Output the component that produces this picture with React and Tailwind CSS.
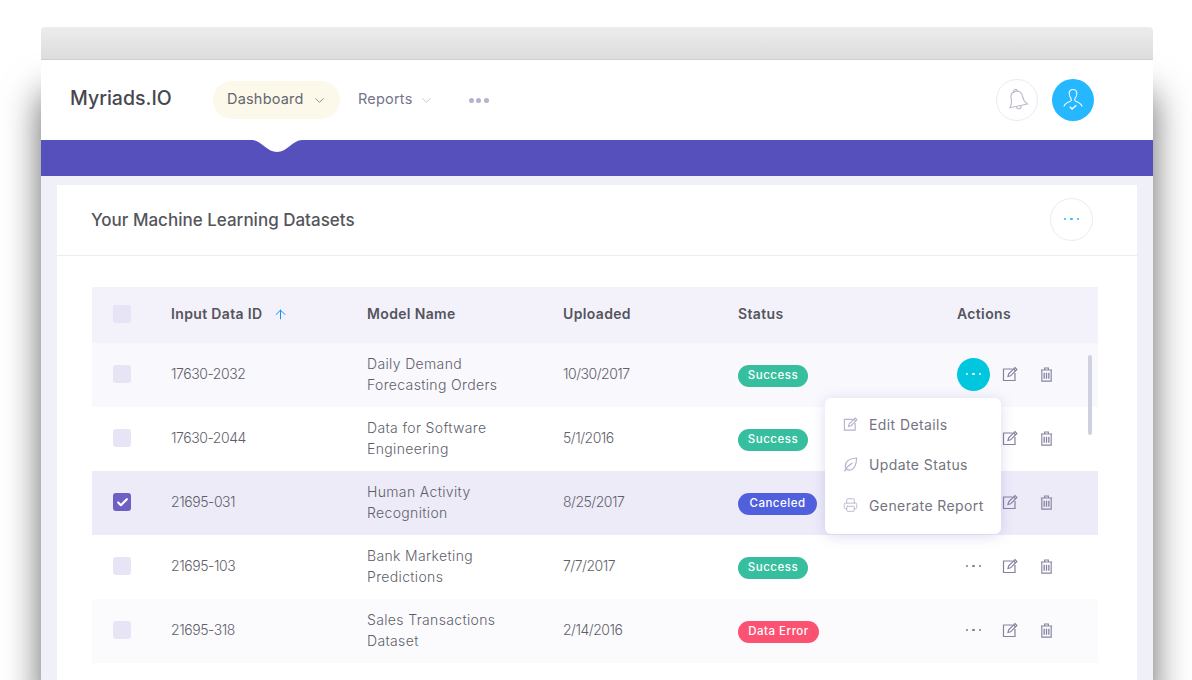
import { ChevronDown, ArrowUp, Printer, Check } from 'lucide-react'

const rows = [
  { id: '17630-2032', name: ['Daily Demand', 'Forecasting Orders'], date: '10/30/2017', status: 'Success', bg: 'bg-[#f8f8fd]', open: true },
  { id: '17630-2044', name: ['Data for Software', 'Engineering'], date: '5/1/2016', status: 'Success', bg: 'bg-white' },
  { id: '21695-031', name: ['Human Activity', 'Recognition'], date: '8/25/2017', status: 'Canceled', bg: 'bg-[#edebf8]', checked: true },
  { id: '21695-103', name: ['Bank Marketing', 'Predictions'], date: '7/7/2017', status: 'Success', bg: 'bg-white' },
  { id: '21695-318', name: ['Sales Transactions', 'Dataset'], date: '2/14/2016', status: 'Data Error', bg: 'bg-[#fbfbfd]' },
]

const statusColors = {
  Success: 'bg-[#35bf9e] w-[70px]',
  Canceled: 'bg-[#5060dc] w-[79px]',
  'Data Error': 'bg-[#fb5272] w-[81px]',
}

const gridCols = 'grid grid-cols-[79px_196px_196px_175px_219px_1fr] items-center'

function EditIcon({ className }) {
  return (
    <svg viewBox="0 0 16 16" fill="none" stroke="currentColor" strokeWidth="1.2" className={className}>
      <path d="M10.5 3H1.500v11.500H13V7" />
      <path d="M6 10.500l.7-2.600L13 1.600l1.900 1.900-6.300 6.300z" />
      <path d="M11.600 3l1.900 1.900" />
    </svg>
  )
}

function TrashIcon({ className }) {
  return (
    <svg viewBox="0 0 16 16" fill="none" stroke="currentColor" strokeWidth="1.200" className={className}>
      <path d="M2 3.200h12M3 3.200V15h10V3.200M6 3V1h4v2" />
      <path d="M5.500 6v6.500M8 6v6.500M10.500 6v6.500" strokeWidth="1.400" />
    </svg>
  )
}

function LeafIcon({ className }) {
  return (
    <svg viewBox="0 0 16 16" fill="none" stroke="currentColor" strokeWidth="1.200" className={className}>
      <path d="M14.500 1C8.500 1.500 2.500 3.500 2.500 9.300c0 2.800 1.700 4.700 4.300 4.700 5.400 0 7.700-6.500 7.700-13z" />
      <path d="M1.500 15.500C3.500 11.500 6.500 8.500 10 6.500" />
    </svg>
  )
}

function BellIcon({ className }) {
  return (
    <svg viewBox="0 0 24 24" fill="none" stroke="currentColor" strokeWidth="1.100" className={className}>
      <g transform="rotate(-12 12 12)">
        <path d="M12 3c-3.800 0-5.600 2.800-5.600 6.300 0 3.600-1.200 6-3 8h17.200c-1.800-2-3-4.400-3-8C17.600 5.800 15.800 3 12 3z" />
        <path d="M10.200 3.300C10.200 2 11 1.200 12 1.200s1.800.8 1.800 2.100M9.500 17.300c.3 1.800 1.300 2.800 2.500 2.800s2.200-1 2.500-2.800" />
      </g>
    </svg>
  )
}

function UserCheckIcon({ className }) {
  return (
    <svg viewBox="0 0 24 24" fill="none" stroke="currentColor" strokeWidth="1.100" className={className}>
      <path d="M12 1.500c-2.400 0-3.800 1.700-3.800 4 0 2.300.9 3.900 1.800 5 .5.700.4 2-.5 2.600-1.700 1-6 2-6.500 5.400" />
      <path d="M12 1.500c2.400 0 3.800 1.700 3.800 4 0 2.300-.9 3.900-1.800 5-.5.700-.4 2 .5 2.600 1.700 1 6 2 6.500 5.400" />
      <path d="M8.800 18.800l2.300 2.200 4.200-3.800" strokeWidth="1.300" />
    </svg>
  )
}

function Dots({ className = '' }) {
  return (
    <div className={`flex items-center gap-[4px] ${className}`}>
      <span className="w-[2.500px] h-[2.500px] rounded-full bg-current" />
      <span className="w-[2.500px] h-[2.500px] rounded-full bg-current" />
      <span className="w-[2.500px] h-[2.500px] rounded-full bg-current" />
    </div>
  )
}

function Box({ checked }) {
  if (checked) {
    return (
      <div className="w-[18px] h-[18px] rounded-[3px] bg-[#6d5fc4] flex items-center justify-center">
        <Check size={13} strokeWidth={4} className="text-white" />
      </div>
    )
  }
  return <div className="w-[18px] h-[18px] rounded-[3px] bg-[#e6e4f5]" />
}

function Menu() {
  const items = [
    { label: 'Edit Details', icon: <EditIcon className="w-[16px] h-[16px]" /> },
    { label: 'Update Status', icon: <LeafIcon className="w-[15px] h-[15px]" /> },
    { label: 'Generate Report', icon: <Printer size={16} strokeWidth={1.400} /> },
  ]
  return (
    <div className="absolute left-[733px] top-[111px] z-20 w-[176px] h-[136px] rounded-[6px] bg-white shadow-[0_2px_14px_rgba(90,80,190,0.2)] pl-[18px] pt-[6px] flex flex-col">
      {items.map(item => (
        <div key={item.label} className="h-[40.500px] flex items-center gap-[11px] text-[14px] tracking-[0.4px] text-[#74747f]">
          <span className="w-[15px] flex justify-center text-[#b4b2cc]">{item.icon}</span>
          {item.label}
        </div>
      ))}
    </div>
  )
}

export default function App() {
  return (
    <div className="h-[680px] overflow-hidden bg-white pt-[27px] pl-[41px] pr-[39px] font-['Inter','Liberation_Sans',sans-serif]">
      <div className="relative z-10 h-[33px] rounded-t-[4px] bg-gradient-to-b from-[#ececec] to-[#dddddd] border-b border-[#cfcfcf]" />

      <div className="h-[620px] bg-[#f0f1f8] shadow-[0_34px_34px_rgba(0,0,0,0.6)]">
        <header className="h-[80px] bg-white flex items-center pl-[29px] pr-[59px]">
          <div className="w-[143px] pb-[2px] text-[19.500px] font-medium text-[#47474f]">Myriads.IO</div>
          <div className="w-[127px] h-[38px] rounded-full bg-[#fcf9ea] flex items-center pl-[14px] gap-[8px] text-[14.500px] tracking-[0.2px] text-[#66666f]">
            <span className="pb-[2px]">Dashboard</span>
            <ChevronDown size={15} strokeWidth={1.200} className="text-[#6a6a75]" />
          </div>
          <div className="ml-[18px] flex items-center gap-[6px] text-[14.500px] tracking-[0.2px] text-[#74748a]">
            <span className="pb-[2px]">Reports</span>
            <ChevronDown size={15} strokeWidth={1.200} className="text-[#b6b6cc]" />
          </div>
          <div className="ml-[35px] flex items-center gap-[2.500px] text-[#b3b3cd]">
            <span className="w-[5px] h-[5px] rounded-full bg-current" />
            <span className="w-[5px] h-[5px] rounded-full bg-current" />
            <span className="w-[5px] h-[5px] rounded-full bg-current" />
          </div>
          <div className="ml-auto flex items-center gap-[14px]">
            <div className="w-[42px] h-[42px] rounded-full border border-[#ecebf5] flex items-center justify-center text-[#bdb9cf]">
              <BellIcon className="w-[25px] h-[25px]" />
            </div>
            <div className="w-[42px] h-[42px] rounded-full bg-[#25b7ff] flex items-center justify-center text-white">
              <UserCheckIcon className="w-[24px] h-[24px]" />
            </div>
          </div>
        </header>

        <div className="relative h-[36px] bg-[#5650bd]">
          <svg viewBox="0 0 50 12" className="absolute left-[211px] top-0 w-[50px] h-[12px]">
            <path d="M0 0C9 0 15 12 25 12S41 0 50 0z" fill="#ffffff" />
          </svg>
        </div>

        <div className="mx-[16px] mt-[9px] bg-white h-[495px]">
          <div className="h-[71px] border-b border-[#ebebf0] flex items-center justify-between pl-[34px] pr-[44px]">
            <h2 className="pt-[1px] text-[17px] font-medium text-[#55555c]">Your Machine Learning Datasets</h2>
            <div className="w-[43px] h-[43px] mb-[2px] rounded-full border border-[#ebebf2] flex items-center justify-center text-[#25b7ff]">
              <Dots />
            </div>
          </div>

          <div className="relative ml-[35px] mr-[39px] mt-[31px]">
            <div className={`${gridCols} h-[56px] pb-[2px] bg-[#f3f2fb] text-[14px] font-semibold tracking-[0.35px] text-[#55555c]`}>
              <div className="pl-[21px]"><Box /></div>
              <div className="flex items-center gap-[11px]">
                <span className="pb-[1px]">Input Data ID</span>
                <ArrowUp size={15} strokeWidth={1.600} className="text-[#0a96f5]" />
              </div>
              <div className="pb-[1px]">Model Name</div>
              <div className="pb-[1px]">Uploaded</div>
              <div className="pb-[1px]">Status</div>
              <div className="pb-[1px]">Actions</div>
            </div>

            {rows.map(row => (
              <div key={row.id} className={`${gridCols} h-[64px] pb-[2px] ${row.bg} text-[14px] font-light text-[#5f5f6b]`}>
                <div className="pl-[21px]"><Box checked={row.checked} /></div>
                <div className="pb-[1px] tracking-[-0.45px]">{row.id}</div>
                <div className="leading-[21px] tracking-[0.35px]">
                  <div>{row.name[0]}</div>
                  <div>{row.name[1]}</div>
                </div>
                <div className="pb-[1px] tracking-[-0.5px]">{row.date}</div>
                <div className="pt-[2px]">
                  <span className={`inline-flex h-[22px] items-center justify-center rounded-full text-[11.500px] font-medium tracking-[0.5px] text-white ${statusColors[row.status]}`}>
                    {row.status}
                  </span>
                </div>
                <div className="flex items-center text-[#85839f]">
                  <div className={`w-[33px] h-[33px] rounded-full flex items-center justify-center ${row.open ? 'bg-[#00c6de] text-white' : 'text-[#7d7b96]'}`}>
                    <Dots />
                  </div>
                  <EditIcon className="ml-[12px] w-[16px] h-[16px]" />
                  <TrashIcon className="ml-[21px] w-[15px] h-[15px]" />
                </div>
              </div>
            ))}

            <div className="absolute left-[996px] top-[68px] w-[4px] h-[80px] rounded-full bg-[#d0d1e0]" />
            <Menu />
          </div>
        </div>
      </div>
    </div>
  )
}
